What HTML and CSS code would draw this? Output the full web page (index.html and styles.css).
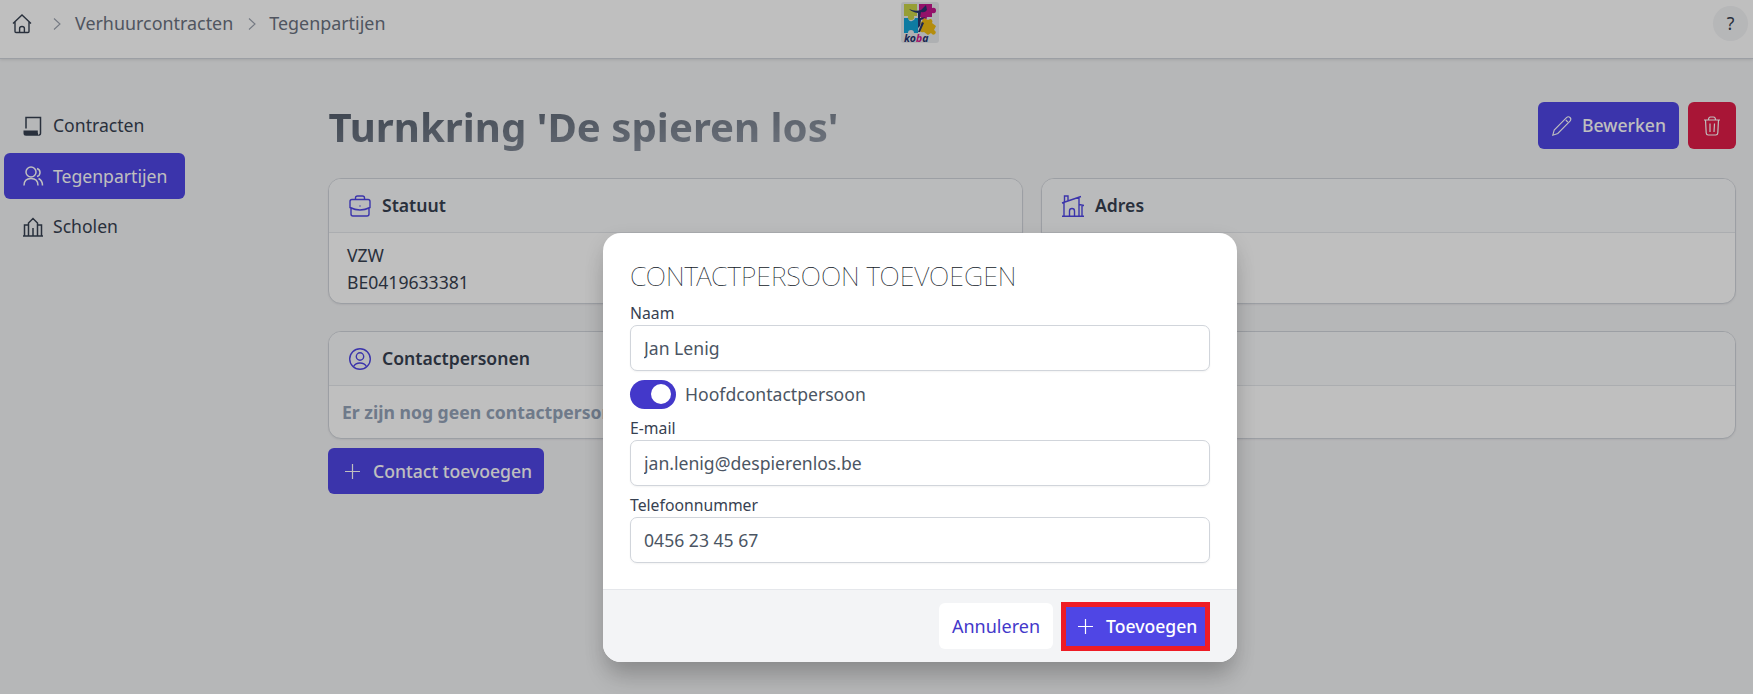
FILE: index.html
```html
<!DOCTYPE html>
<html lang="nl">
<head>
<meta charset="utf-8">
<title>Tegenpartijen</title>
<link rel="stylesheet" href="styles.css">
</head>
<body>
<header class="topbar">
  <nav class="crumbs">
    <svg class="ic home" viewBox="0 0 20 20"><path d="M1 9.500 10 1l9 8.500M3 8v9.500q0 1 1 1h12q1 0 1-1V8M7.600 18.500v-4q0-2 2.400-2t2.400 2v4"/></svg>
    <svg class="ic chev" viewBox="0 0 8 12"><path d="m1 .5 6 5.500-6 5.500"/></svg>
    <a>Verhuurcontracten</a>
    <svg class="ic chev" viewBox="0 0 8 12"><path d="m1 .5 6 5.500-6 5.500"/></svg>
    <a>Tegenpartijen</a>
  </nav>
  <svg class="logo" viewBox="0 0 40 42">
    <rect x="1" width="38" height="41" rx="3" fill="#e9ebee"/>
    <path fill="#c9d348" d="M4 2h13v12h-3q1 4-3 4t-3-4H4z"/>
    <path fill="#c5168c" d="M19 2h13v4q4-1 4 2.500T32 11v4h-5q0 3-3 3t-3-3h-2z"/>
    <path fill="#12a5d8" d="M4 16h4q1 4 4 3t3-3h3v15h-4q0-3-3-3t-3 3H4z"/>
    <path fill="#f0bd12" d="m24 16 4 2q3-2 4 0t0 3l4 3-2 4q3 2 1 4t-4-1l-3 2-4-3q-3 1-4-1t2-4l-2-3z"/>
    <path fill="#26356f" d="M9 7q6 3 12 1l5-5 1 5q-2 3-6 2l-1 6 6-1-5 3-1 6-2 2v-15q-6-1-9-4zM22 20l2 1-4 9h-2z"/>
    <text x="4" y="40" class="logo-text">ko<tspan fill="#d6168c">b</tspan>a</text>
  </svg>
  <button class="help">?</button>
</header>
<div class="layout">
  <aside class="sidebar">
    <a class="side"><svg class="ic" viewBox="0 0 20 20"><path d="M3 12.500V1.500h14.500V17q0 2-1.500 2"/><path fill="currentColor" stroke="none" d="M.5 14.500h14.300v2q0 2 1.500 3.200H3q-2.500 0-2.500-2.500z"/></svg>Contracten</a>
    <a class="side active"><svg class="ic" viewBox="0 0 20 20"><circle cx="8" cy="6" r="5"/><path d="M1 19.500q0-7 7-7t7 7M14 2.500q3 1 3 4t-3 4M15.500 12.500q4 2 4 7"/></svg>Tegenpartijen</a>
    <a class="side"><svg class="ic" viewBox="0 0 20 20"><path d="M0 19h20M1.500 19V8H5m13.500 11V8H15M5.500 19V6L10 1.500 14.500 6v13M10 19v-8"/></svg>Scholen</a>
  </aside>
  <main class="main">
    <div class="title-row">
      <h1>Turnkring 'De spieren los'</h1>
      <div class="actions">
        <button class="btn edit"><svg class="ic" viewBox="0 0 20 20"><path d="m.8 19.200 1.400-5.200L14.500 1.700q1.800-1.800 3.500-.2t0 3.600L5.800 17.500zM13.800 4l2 2"/></svg>Bewerken</button>
        <button class="btn trash"><svg class="ic" viewBox="0 0 18 20"><path d="M1 4h16M5.500 4q0-3 2-3h3q2 0 2 3M2.500 4l.7 13q.2 2 2 2h7.600q1.800 0 2-2l.7-13M7 7.500v8.500M11.500 7.500 11 16"/></svg></button>
      </div>
    </div>
    <div class="cards">
      <section class="card">
        <h2><svg class="ic" viewBox="0 0 22 22"><path d="M6.500 4.500V3q0-2 2-2h5q2 0 2 2v1.500M3 4.500h16q2 0 2 2v6q-5 2.500-10 2.500T1 12.500v-6q0-2 2-2zM2 13.500V19q0 2 2 2h14q2 0 2-2v-5.500M10.500 11h1"/></svg>Statuut</h2>
        <div class="card-body">VZW<br>BE0419633381</div>
      </section>
      <section class="card">
        <h2><svg class="ic" viewBox="0 0 22 22"><path d="M0 21.300h22M2 21.300V6.500M0 8 19 1.500M2.500 6.500V1h3.500v4.500M17 2v19.300M17 9.500l5 1M20 10v11M7.500 21v-5q0-2.500 2.500-2.500t2.500 2.500v5"/></svg>Adres</h2>
        <div class="card-body"></div>
      </section>
      <section class="card">
        <h2><svg class="ic" viewBox="0 0 22 22"><circle cx="11" cy="11" r="10.300"/><circle cx="11" cy="8.500" r="3.700"/><path d="M4.500 18.500q2-3.500 6.500-3.500t6.500 3.500"/></svg>Contactpersonen</h2>
        <div class="card-body empty">Er zijn nog geen contactpersonen</div>
      </section>
      <section class="card">
        <h2></h2>
        <div class="card-body empty"></div>
      </section>
    </div>
    <button class="btn add"><svg class="ic" viewBox="0 0 15 15"><path d="M7.500 0v15M0 7.500h15"/></svg>Contact toevoegen</button>
  </main>
</div>
<div class="overlay">
  <form class="modal">
    <div class="modal-body">
      <h3>Contactpersoon toevoegen</h3>
      <label>Naam</label>
      <input value="Jan Lenig">
      <div class="toggle-row"><span class="toggle"></span>Hoofdcontactpersoon</div>
      <label>E-mail</label>
      <input value="jan.lenig@despierenlos.be">
      <label>Telefoonnummer</label>
      <input value="0456 23 45 67">
    </div>
    <footer class="modal-foot">
      <button type="button" class="btn cancel">Annuleren</button>
      <button type="button" class="btn submit"><svg class="ic" viewBox="0 0 15 15"><path d="M7.500 0v15M0 7.500h15"/></svg>Toevoegen</button>
    </footer>
  </form>
</div>
</body>
</html>
```

FILE: styles.css
```css
* { box-sizing: border-box; }
body { margin: 0; height: 694px; overflow: hidden; background: #f3f4f6; color: #374151; font: 17.6px/27px "Noto Sans", sans-serif; }
h1, h2, h3 { margin: 0; }
button, input { font: inherit; margin: 0; border: 0; }
.ic { fill: none; stroke: currentColor; stroke-width: 1.4; flex: none; overflow: visible; }

.topbar { height: 59px; display: grid; grid-template-columns: 900px 40px 1fr; align-items: start; background: #fff; border-bottom: 1px solid #d1d5db; box-shadow: 0 1px 3px rgba(0,0,0,.1); }
.crumbs { display: flex; align-items: center; padding: 10px 0 0 12px; color: #6b7280; font-size: 17.9px; }
.home { width: 20px; height: 20px; color: #374151; }
.chev { width: 8px; height: 12px; color: #9ca3af; stroke-width: 1.1; margin: 0 13px 0 15px; }
.home + .chev { margin: 0 14px 0 21px; }
.logo { width: 40px; height: 42px; margin-top: 2px; overflow: visible; }
.logo-text { font: italic bold 10.500px/16px "Noto Sans", sans-serif; fill: #26356f; }
.help { justify-self: end; width: 35px; height: 35px; margin: 6px 5px 0 0; padding: 0; border-radius: 50%; background: #f3f4f6; color: #374151; }

.layout { display: flex; }
.sidebar { width: 328px; padding: 43.5px 0 0 4px; display: flex; flex-direction: column; align-items: flex-start; gap: 4.5px; }
.side { display: flex; align-items: center; gap: 10px; height: 46px; padding: 0 18px 0 19px; border-radius: 6px; }
.side .ic { width: 20px; height: 20px; stroke-width: 1.5; }
.side.active { background: #4f46e5; color: #fff; }

.main { flex: 1; padding: 43px 17px 0 0; }
.title-row { display: flex; justify-content: space-between; height: 47px; }
h1 { height: 60px; margin-top: -5px; padding-left: .5px; font-size: 40.2px; line-height: 60px; background: linear-gradient(to bottom right, #4b5563, #9ca3af); -webkit-background-clip: text; background-clip: text; color: transparent; }
.actions { display: flex; gap: 9px; }
.btn { display: flex; align-items: center; height: 46px; border-radius: 6px; background: #4f46e5; color: #fff; font-weight: 500; white-space: nowrap; }
.edit { height: 47px; width: 141px; padding: 0 0 0 14px; gap: 10px; }
.edit .ic { width: 20px; height: 20px; stroke-width: 1.1; }
.trash { height: 47px; width: 48px; padding: 0; justify-content: center; background: #e11d48; }
.trash .ic { width: 18px; height: 20px; stroke-width: 1.2; }
.cards { display: grid; grid-template-columns: 1fr 1fr; gap: 27px 18px; margin-top: 29px; }
.card { overflow: hidden; background: #fff; border: 1px solid #d1d5db; border-radius: 13px; box-shadow: 0 1px 2px rgba(0,0,0,.06); }
.card h2 { display: flex; align-items: center; gap: 11px; height: 54px; padding-left: 20px; border-bottom: 1px solid #e5e7eb; background: #f9fafb; color: #374151; font-size: 17.6px; font-weight: 600; }
.card h2 .ic { width: 22px; height: 22px; color: #4f46e5; }
.card-body { height: 70px; padding: 9px 18px 7px; }
.card-body.empty { height: 52px; padding: 13px 13px 12px; color: #94a3b8; font-weight: 700; }
.add { width: 216px; margin-top: 9px; padding: 0 0 0 17px; gap: 13px; }
.add .ic, .submit .ic { width: 15px; height: 15px; stroke-width: 1.2; }

.overlay { position: absolute; inset: 0; background: rgba(0,0,0,.25); display: flex; justify-content: center; align-items: flex-start; padding: 233px 0 0 87px; }
.modal { width: 634px; height: 429px; overflow: hidden; border-radius: 18px; background: #fff; box-shadow: 0 20px 25px -5px rgba(0,0,0,.15), 0 8px 20px rgba(0,0,0,.12); }
.modal-body { height: 356px; padding: 25px 27px 0; display: flex; flex-direction: column; }
h3 { font-size: 26.7px; line-height: 36px; font-weight: 100; text-transform: uppercase; color: #111827; white-space: nowrap; }
label { margin-top: 7px; font-size: 15.75px; line-height: 24px; }
.modal-body input { height: 46px; padding: 0 13px; border: 1px solid #d1d5db; border-radius: 7px; background: #fff; color: #4b5563; box-shadow: 0 1px 2px rgba(0,0,0,.05); }
.toggle-row { display: flex; align-items: center; gap: 9px; height: 29px; margin-top: 9px; color: #4b5563; }
.toggle { width: 46px; height: 29px; padding: 4px 5px; border-radius: 15px; background: #4338ca; display: flex; justify-content: flex-end; }
.toggle::before { content: ""; width: 20px; height: 20px; border-radius: 50%; background: #fff; }
.modal-foot { height: 73px; padding: 12px 27px 0; display: flex; justify-content: flex-end; align-items: flex-start; gap: 8px; background: #f3f4f6; border-top: 1px solid #e5e7eb; }
.cancel { width: 114px; margin-top: 1px; padding: 0; justify-content: center; background: #fff; color: #4338ca; font-weight: 400; font-size: 18px; }
.submit { width: 149px; height: 49px; padding: 0 0 0 12px; gap: 13px; border: 5px solid #ee1c25; border-radius: 0; }
```
